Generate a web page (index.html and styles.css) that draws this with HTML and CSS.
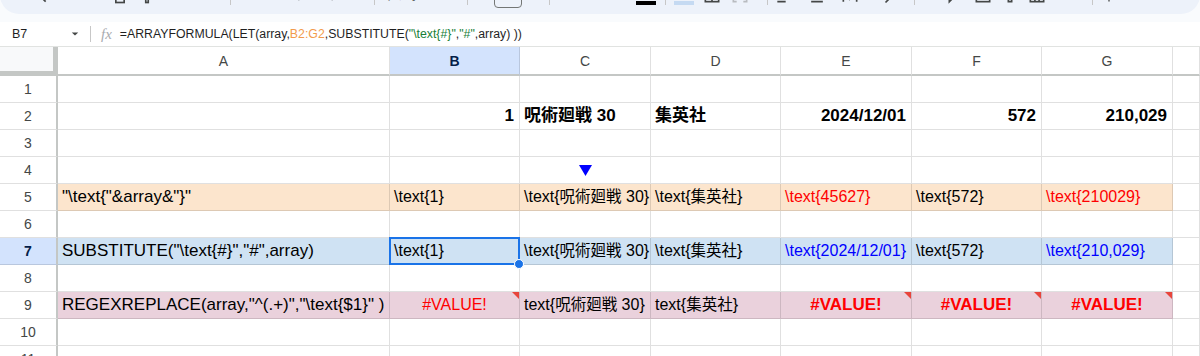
FILE: index.html
```html
<!DOCTYPE html>
<html lang="ja">
  <head>
    <meta charset="UTF-8" />
    <meta name="viewport" content="width=device-width, initial-scale=1.0" />
    <title>LaTeX テキスト変換</title>
    <link rel="stylesheet" href="styles.css">
  </head>
  <body>
    <div class="chrome">
      <div class="toolbar">
        <div class="tb-group g-history">
          <span class="slot"><svg viewBox="0 0 24 24"><circle cx="10" cy="10" r="6"/><path d="M14.5 14.5L20 20"/></svg></span>
          <span class="slot"><svg viewBox="0 0 24 24"><path d="M8 7H15a5 5 0 0 1 0 10H7M8 7l-3 3M8 7l-3-3"/></svg></span>
          <span class="slot"><svg viewBox="0 0 24 24"><path d="M16 7H9a5 5 0 0 0 0 10h8M16 7l3 3M16 7l3-3"/></svg></span>
          <span class="slot"><svg viewBox="0 0 24 24"><path d="M7 8V3h10v5"/><rect x="3" y="8" width="18" height="9" rx="1.5"/><rect x="7" y="13" width="10" height="8"/></svg></span>
          <span class="slot"><svg viewBox="0 0 24 24"><rect x="5" y="3" width="12" height="6" rx="1"/><path d="M17 6h3v5h-8v3"/><rect x="10.5" y="14" width="3" height="7"/></svg></span>
        </div>
        <div class="zoom-sel">100%<svg class="caret" viewBox="0 0 10 10"><path d="M1 3h8L5 7z"/></svg></div>
        <span class="sep"></span>
        <div class="tb-group g-number">
          <span class="slot glyph">¥</span>
          <span class="slot glyph">%</span>
          <span class="slot"><svg viewBox="0 0 24 24"><path d="M6 15h12M6 15l3-3M6 15l3 3"/><circle cx="7" cy="8" r="0.6"/><rect x="10" y="3" width="4" height="6" rx="2"/></svg></span>
          <span class="slot"><svg viewBox="0 0 24 24"><path d="M6 15h12M18 15l-3-3M18 15l-3 3"/><circle cx="5" cy="8" r="0.6"/><rect x="8" y="3" width="4" height="6" rx="2"/><rect x="14" y="3" width="4" height="6" rx="2"/></svg></span>
          <span class="slot glyph small">123</span>
        </div>
        <span class="sep"></span>
        <div class="font-sel">デフォル...<svg class="caret" viewBox="0 0 10 10"><path d="M1 3h8L5 7z"/></svg></div>
        <span class="sep"></span>
        <div class="size-sel">
          <span class="size-btn">−</span>
          <span class="size-box">10</span>
          <span class="size-btn">+</span>
        </div>
        <span class="sep"></span>
        <div class="tb-group g-text">
          <span class="slot glyph bold">B</span>
          <span class="slot glyph italic">I</span>
          <span class="slot glyph strike">S</span>
          <span class="slot color-a"><span>A</span><i class="bar"></i></span>
        </div>
        <span class="sep"></span>
        <div class="tb-group g-cell">
          <span class="slot fill"><svg viewBox="0 0 24 24"><path d="M6 10l6-6 6 6-6 6z"/></svg><i class="bar"></i></span>
          <span class="slot"><svg viewBox="0 0 24 24"><rect x="4" y="4" width="16" height="16"/><path d="M12 4v16M4 12h16"/></svg></span>
          <span class="slot faded"><svg viewBox="0 0 24 24"><path d="M4 8V4h4M16 4h4v4M20 16v4h-4M8 20H4v-4M8 12h8"/></svg></span>
        </div>
        <span class="sep"></span>
        <div class="tb-group g-align">
          <span class="slot"><svg viewBox="0 0 24 24"><path d="M4 5h16M4 10h10M4 15h16M4 20h10"/></svg></span>
          <span class="slot"><svg viewBox="0 0 24 24"><path d="M12 3v12M8 11l4 4 4-4M5 20h14"/></svg></span>
          <span class="slot"><svg viewBox="0 0 24 24"><path d="M4 4v16M20 4v16M8 12h6a2 2 0 0 1 0 4h-2M12 14l-2 2 2 2"/></svg></span>
          <span class="slot"><svg viewBox="0 0 24 24"><path d="M4 17h15M15 13l4 4-4 4M8 4l3 9 3-9"/></svg></span>
        </div>
        <span class="sep"></span>
        <div class="tb-group g-insert">
          <span class="slot faded"><svg viewBox="0 0 24 24"><path d="M10 8H7a4 4 0 0 0 0 8h3M14 8h3a4 4 0 0 1 0 8h-3M8 12h8"/></svg></span>
          <span class="slot"><svg viewBox="0 0 24 24"><path d="M4 4h16v12H8l-4 4z"/></svg></span>
          <span class="slot"><svg viewBox="0 0 24 24"><rect x="4" y="4" width="16" height="16"/><path d="M8 16v-4M12 16V8M16 16v-6"/></svg></span>
          <span class="slot"><svg viewBox="0 0 24 24"><path d="M4 5h16l-6 8v7h-4v-7z"/></svg></span>
          <span class="slot"><svg viewBox="0 0 24 24"><rect x="4" y="4" width="16" height="16"/><path d="M4 9h16M4 14.5h16M9.5 9v11M14.5 9v11"/></svg></span>
          <span class="slot sigma glyph">Σ</span>
        </div>
        <span class="sep"></span>
        <span class="slot more"><svg viewBox="0 0 24 24"><circle cx="12" cy="5" r="1"/><circle cx="12" cy="12" r="1"/><circle cx="12" cy="19" r="1"/></svg></span>
      </div>
    </div>

    <div class="formula-bar">
      <div class="name-box">B7<svg class="caret" viewBox="0 0 10 10"><path d="M1 3h8L5 7z"/></svg></div>
      <span class="divider"></span>
      <span class="fx">fx</span>
      <div class="formula">=ARRAYFORMULA(LET(array,<span class="ref">B2:G2</span>,SUBSTITUTE(<span class="str">"\text{#}"</span>,<span class="str">"#"</span>,array) ))</div>
    </div>

    <div class="sheet">
      <div class="row hdr">
        <div class="corner"></div>
        <div class="col">A</div>
        <div class="col on">B</div>
        <div class="col">C</div>
        <div class="col">D</div>
        <div class="col">E</div>
        <div class="col">F</div>
        <div class="col">G</div>
        <div class="col"></div>
      </div>

      <div class="row">
        <div class="rh">1</div>
        <div class="c"></div><div class="c"></div><div class="c"></div><div class="c"></div>
        <div class="c"></div><div class="c"></div><div class="c"></div><div class="x"></div>
      </div>

      <div class="row">
        <div class="rh">2</div>
        <div class="c"></div>
        <div class="c num b">1</div>
        <div class="c b"><span class="jp">呪術廻戦</span>&nbsp;30</div>
        <div class="c b"><span class="jp">集英社</span></div>
        <div class="c num b">2024/12/01</div>
        <div class="c num b">572</div>
        <div class="c num b">210,029</div>
        <div class="x"></div>
      </div>

      <div class="row">
        <div class="rh">3</div>
        <div class="c"></div><div class="c"></div><div class="c"></div><div class="c"></div>
        <div class="c"></div><div class="c"></div><div class="c"></div><div class="x"></div>
      </div>

      <div class="row">
        <div class="rh">4</div>
        <div class="c"></div><div class="c"></div>
        <div class="c mid"><svg class="down" viewBox="0 0 13 11"><path d="M0 0h13L6.5 11z"/></svg></div>
        <div class="c"></div><div class="c"></div><div class="c"></div><div class="c"></div><div class="x"></div>
      </div>

      <div class="row r5">
        <div class="rh">5</div>
        <div class="c label">"\text{"&amp;array&amp;"}"</div>
        <div class="c">\text{1}</div>
        <div class="c">\text{<span class="jp">呪術廻戦</span>&nbsp;30}</div>
        <div class="c">\text{<span class="jp">集英社</span>}</div>
        <div class="c red">\text{45627}</div>
        <div class="c">\text{572}</div>
        <div class="c red">\text{210029}</div>
        <div class="x"></div>
      </div>

      <div class="row">
        <div class="rh">6</div>
        <div class="c"></div><div class="c"></div><div class="c"></div><div class="c"></div>
        <div class="c"></div><div class="c"></div><div class="c"></div><div class="x"></div>
      </div>

      <div class="row r7">
        <div class="rh on">7</div>
        <div class="c label">SUBSTITUTE("\text{#}","#",array)</div>
        <div class="c sel">\text{1}</div>
        <div class="c">\text{<span class="jp">呪術廻戦</span>&nbsp;30}</div>
        <div class="c">\text{<span class="jp">集英社</span>}</div>
        <div class="c blue">\text{2024/12/01}</div>
        <div class="c">\text{572}</div>
        <div class="c blue">\text{210,029}</div>
        <div class="x"></div>
      </div>

      <div class="row">
        <div class="rh">8</div>
        <div class="c"></div><div class="c"></div><div class="c"></div><div class="c"></div>
        <div class="c"></div><div class="c"></div><div class="c"></div><div class="x"></div>
      </div>

      <div class="row r9">
        <div class="rh">9</div>
        <div class="c label">REGEXREPLACE(array,"^(.+)","\text{$1}" )</div>
        <div class="c mid red err">#VALUE!</div>
        <div class="c">text{<span class="jp">呪術廻戦</span>&nbsp;30}</div>
        <div class="c">text{<span class="jp">集英社</span>}</div>
        <div class="c mid red b err">#VALUE!</div>
        <div class="c mid red b err">#VALUE!</div>
        <div class="c mid red b err">#VALUE!</div>
        <div class="x"></div>
      </div>

      <div class="row">
        <div class="rh">10</div>
        <div class="c"></div><div class="c"></div><div class="c"></div><div class="c"></div>
        <div class="c"></div><div class="c"></div><div class="c"></div><div class="x"></div>
      </div>

      <div class="row">
        <div class="rh">11</div>
        <div class="c"></div><div class="c"></div><div class="c"></div><div class="c"></div>
        <div class="c"></div><div class="c"></div><div class="c"></div><div class="x"></div>
      </div>
    </div>
  </body>
</html>
```

FILE: styles.css
```css
* {
  margin: 0;
  padding: 0;
  box-sizing: border-box;
}

body {
  width: 1200px;
  height: 356px;
  overflow: hidden;
  background: #fff;
  color: #000;
  font-family: "Liberation Sans", "Noto Sans CJK JP", sans-serif;
}

/* toolbar (only its bottom edge is on screen) */
.chrome {
  height: 22px;
  background: #f9fbfd;
  overflow: hidden;
}

.toolbar {
  height: 38px;
  margin-top: -24px;
  padding-left: 25px;
  display: flex;
  align-items: center;
  background: #edf2fa;
  border-radius: 24px;
  color: #444746;
}

.tb-group {
  display: flex;
  align-items: center;
  flex: none;
}

.slot {
  width: 27px;
  height: 24px;
  flex: none;
  display: flex;
  flex-direction: column;
  align-items: center;
  justify-content: center;
}

.slot svg {
  width: 20px;
  height: 20px;
  fill: none;
  stroke: #444746;
  stroke-width: 2;
}

.glyph {
  font-size: 16px;
}

.glyph.small {
  font-size: 12px;
  font-weight: bold;
}

.bold {
  font-weight: bold;
}

.italic {
  font-style: italic;
  font-family: "Liberation Serif", serif;
}

.strike {
  text-decoration: line-through;
}

.faded svg {
  stroke: #b9bcc0;
}

.sep {
  width: 1px;
  height: 20px;
  margin: 0 4px;
  background: #c7c7c7;
  flex: none;
}

.caret {
  width: 10px;
  height: 10px;
  fill: #444746;
  flex: none;
}

.zoom-sel {
  margin-left: 2px;
  margin-right: 7px;
  display: flex;
  align-items: center;
  gap: 11px;
  font-size: 14px;
}

.font-sel {
  margin-left: 7px;
  margin-right: 6px;
  display: flex;
  align-items: center;
  gap: 8px;
  font-size: 11px;
  white-space: nowrap;
}

.size-sel {
  display: flex;
  align-items: center;
  margin-right: 2px;
}

.size-btn {
  width: 16px;
  text-align: center;
  font-size: 18px;
}

.size-box {
  width: 28px;
  height: 26px;
  margin: 0 5px 0 6px;
  border: 1px solid #747775;
  border-radius: 4px;
  display: flex;
  align-items: center;
  justify-content: center;
  font-size: 13px;
}

.g-text {
  margin-left: -2px;
  margin-right: 1px;
}

.color-a span {
  font-size: 15px;
  line-height: 15px;
}

.bar {
  display: block;
  width: 20px;
  height: 4px;
  background: #000;
}

.fill svg {
  height: 16px;
}

.fill .bar {
  background: #c5daf2;
}

.g-cell .slot {
  width: 28px;
}

.g-cell {
  margin-right: 9px;
}

.g-align {
  margin-left: -4px;
  margin-right: 10px;
}

.g-align .slot {
  width: 33px;
}

.g-insert {
  margin-left: -3px;
}

.sigma {
  margin-left: 10px;
}

.more {
  width: 24px;
}

.more svg {
  fill: #444746;
  stroke: none;
}

/* formula bar */
.formula-bar {
  height: 25px;
  display: flex;
  align-items: center;
  background: #fff;
  border-bottom: 1px solid #e1e3e1;
}

.name-box {
  width: 90px;
  padding-left: 12px;
  padding-right: 11px;
  display: flex;
  align-items: center;
  justify-content: space-between;
  font-size: 12.5px;
  color: #1f1f1f;
}

.name-box .caret {
  width: 8px;
  height: 8px;
}

.divider {
  width: 1px;
  height: 16px;
  background: #c7c7c7;
}

.fx {
  margin-left: 10px;
  font: italic 15px "Liberation Serif", serif;
  color: #a8abaf;
}

.formula {
  margin-left: 8px;
  font-size: 12.3px;
  color: #1f1f1f;
  white-space: nowrap;
}

.ref {
  color: #f29b4c;
}

.str {
  color: #188038;
}

/* grid */
.row {
  display: grid;
  grid-template-columns: 58px 332px 130px 131px 130px 131px 130px 131px 1fr;
  height: 27px;
}

.row > div {
  border-right: 1px solid rgba(0, 0, 0, 0.12);
  border-bottom: 1px solid rgba(0, 0, 0, 0.12);
}

.row.hdr {
  height: 29px;
}

.corner {
  background: #f8f9fa;
  border-right: 5px solid #c4c7c5 !important;
  border-bottom: 5px solid #c4c7c5 !important;
}

.col {
  display: flex;
  align-items: center;
  justify-content: center;
  font-size: 14px;
  color: #444746;
  border-bottom: 2px solid #c4c7c5 !important;
}

.rh {
  display: flex;
  align-items: center;
  justify-content: center;
  font-size: 14px;
  color: #444746;
  border-right: 2px solid #c4c7c5 !important;
}

.col.on,
.rh.on {
  background: #d3e3fd;
  color: #041e49;
  font-weight: bold;
}

.c {
  display: flex;
  align-items: center;
  padding: 0 4px;
  font-size: 16px;
  line-height: 20px;
  white-space: nowrap;
  overflow: hidden;
}

.c.label,
.c.b {
  font-size: 17px;
}

.jp {
  font-size: 15.5px;
}

.b .jp {
  font-size: 17px;
}

.num {
  justify-content: flex-end;
  padding-right: 5px;
}

.mid {
  justify-content: center;
}

.b {
  font-weight: bold;
}

.red {
  color: #ff0000;
}

.blue {
  color: #0000ff;
}

.r5 .c {
  background: #fce5cd;
}

.r7 .c {
  background: #cfe2f3;
}

.r9 .c {
  background: #ead1dc;
}

.down {
  width: 13px;
  height: 11px;
  fill: #0000ff;
}

.sel {
  position: relative;
  overflow: visible;
  z-index: 1;
}

.sel::after {
  content: "";
  position: absolute;
  top: -1px;
  left: -1px;
  right: -1px;
  bottom: -1px;
  border: 2px solid #1a73e8;
}

.sel::before {
  content: "";
  position: absolute;
  right: -5px;
  bottom: -5px;
  width: 8px;
  height: 8px;
  border-radius: 50%;
  background: #1a73e8;
  border: 1px solid #fff;
  z-index: 2;
}

.err {
  position: relative;
}

.err::after {
  content: "";
  position: absolute;
  top: 0;
  right: 0;
  border-top: 7px solid #e8453c;
  border-left: 7px solid transparent;
}
```
